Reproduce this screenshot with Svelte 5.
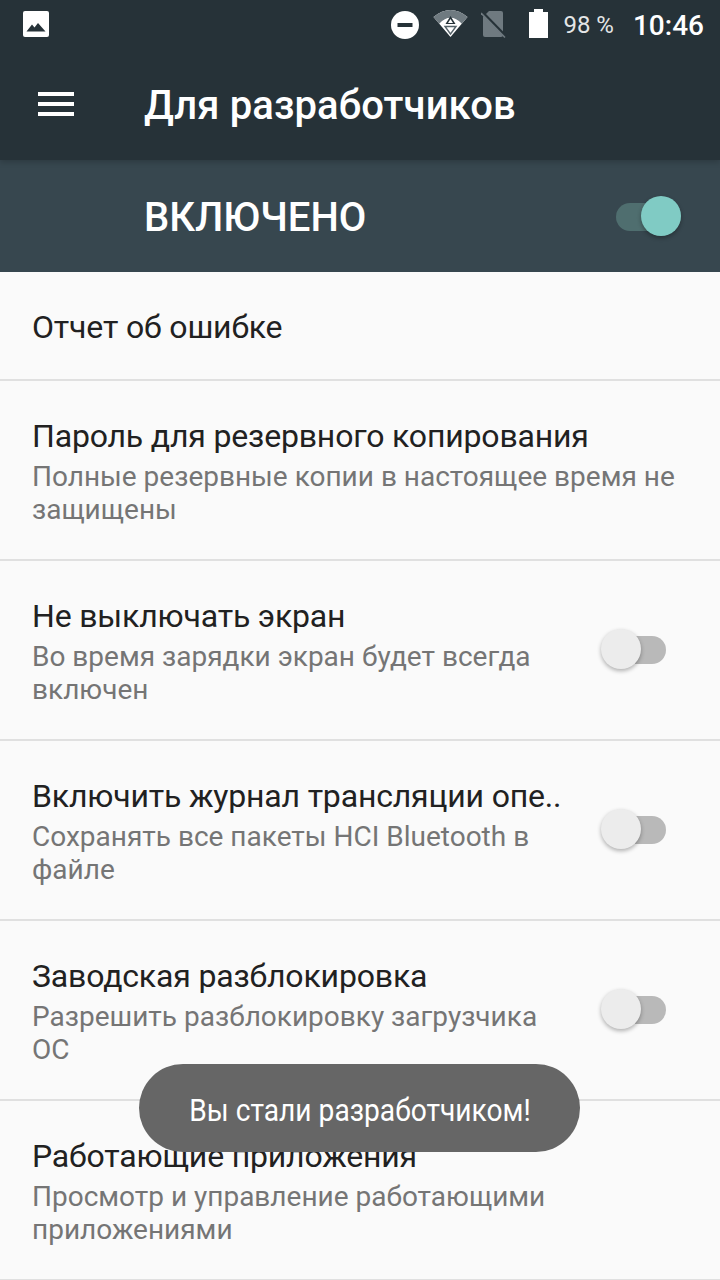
<script lang="ts">
	type Row = { title: string; summary?: string; toggle?: boolean };

	const rows: Row[] = [
		{ title: 'Отчет об ошибке' },
		{ title: 'Пароль для резервного копирования', summary: 'Полные резервные копии в настоящее время не защищены' },
		{ title: 'Не выключать экран', summary: 'Во время зарядки экран будет всегда включен', toggle: true },
		{ title: 'Включить журнал трансляции опе..', summary: 'Сохранять все пакеты HCI Bluetooth в файле', toggle: true },
		{ title: 'Заводская разблокировка', summary: 'Разрешить разблокировку загрузчика ОС', toggle: true },
		{ title: 'Работающие приложения', summary: 'Просмотр и управление работающими приложениями' }
	];
</script>

<div class="screen">
	<header class="appbar">
		<div class="status">
			<svg width="26" height="26" viewBox="0 0 26 26">
				<rect x="0" y="0" width="26" height="26" rx="2" fill="#fff" />
				<path d="M3.5 20.5 L9 13.5 L11.5 16.5 L15 12 L22.5 20.5 Z" fill="#263238" />
			</svg>
			<div class="status-right">
				<svg class="dnd" width="28" height="28" viewBox="0 0 28 28">
					<circle cx="14" cy="14" r="14" fill="#fff" />
					<rect x="6.5" y="12" width="15" height="4" fill="#263238" />
				</svg>
				<svg class="wifi" width="35" height="30" viewBox="0 0 35 30">
					<path d="M0.5 9 Q17.5 -5 34.5 9 L17.5 29 Z" fill="#fff" />
					<path d="M0.5 9 Q17.5 -5 34.5 9 L28.8 15.7 Q17.5 4 6.2 15.7 Z" fill="#6f7a80" />
					<path d="M17.5 8 L22.5 16 H12.5 Z" fill="#263238" />
					<path d="M17.5 11 L20 15 H15 Z" fill="#fff" />
					<path d="M12 18.5 H23 L17.5 26 Z" fill="#fff" stroke="#56636a" stroke-width="1.4" />
				</svg>
				<svg class="sim" width="26" height="30" viewBox="0 0 26 30">
					<path d="M8 2 H20 a2 2 0 0 1 2 2 V26 a2 2 0 0 1 -2 2 H4 a2 2 0 0 1 -2 -2 V8 Z" fill="#6f7a80" />
					<path d="M-1 1 L25 27.5" stroke="#263238" stroke-width="3" />
					<path d="M0 4 L24 28.5" stroke="#6f7a80" stroke-width="1.6" />
				</svg>
				<svg class="battery" width="19" height="30" viewBox="0 0 19 30">
					<path d="M5 0 H14 V3 H19 V29 H0 V3 H5 Z" fill="#fff" />
				</svg>
				<span class="pct">98 %</span>
				<span class="clock">10:46</span>
			</div>
		</div>
		<div class="toolbar">
			<div class="menu"><i></i><i></i><i></i></div>
			<h1>Для разработчиков</h1>
		</div>
	</header>

	<div class="master">
		<span>ВКЛЮЧЕНО</span>
		<div class="switch on"><b></b><em></em></div>
	</div>

	<ul class="list">
		{#each rows as row}
			<li class="row">
				<div class="text">
					<div class="title">{row.title}</div>
					{#if row.summary}<div class="summary">{row.summary}</div>{/if}
				</div>
				{#if row.toggle}
					<div class="switch"><b></b><em></em></div>
				{/if}
			</li>
		{/each}
	</ul>

	<div class="toast"><span>Вы стали разработчиком!</span></div>
</div>

<style>
	:global(body) {
		background: #fafafa;
	}

	.screen {
		position: relative;
		width: 720px;
		height: 1280px;
		overflow: hidden;
		background: #fafafa;
		font-family: Roboto, 'Noto Sans', sans-serif;
	}

	.appbar {
		position: relative;
		height: 160px;
		background: #263238;
		box-shadow: 0 2px 6px rgba(0, 0, 0, 0.2);
		color: #fff;
	}

	.status {
		display: flex;
		align-items: center;
		justify-content: space-between;
		height: 48px;
		padding: 0 16px 0 23px;
	}

	.status-right {
		display: flex;
		align-items: center;
	}

	.dnd {
		margin-top: 2px;
	}

	.wifi {
		margin-left: 14px;
		margin-bottom: 2px;
	}

	.sim {
		margin-left: 13px;
	}

	.battery {
		margin-left: 22px;
	}

	.pct {
		margin-left: 15px;
		margin-top: 2px;
		font-size: 24px;
		color: #e4e6e7;
	}

	.clock {
		margin-left: 19px;
		margin-top: 2px;
		font-size: 28px;
		font-weight: 500;
	}

	.toolbar {
		display: flex;
		align-items: center;
		height: 112px;
		padding-left: 38px;
	}

	.menu {
		display: flex;
		flex-direction: column;
		gap: 6px;
		width: 36px;
		margin-right: 70px;
	}

	.menu i {
		display: block;
		height: 4px;
		background: #fff;
	}

	h1 {
		margin: 0;
		padding-top: 3px;
		font-size: 40px;
		font-weight: 500;
		letter-spacing: 0.1px;
	}

	.master {
		display: flex;
		align-items: center;
		justify-content: space-between;
		height: 112px;
		padding: 0 39px 0 144px;
		background: #37474f;
		color: #fff;
		font-size: 40px;
		font-weight: 500;
	}

	.master span {
		padding-top: 3px;
	}

	.master .switch {
		margin-top: 2px;
	}

	.switch {
		position: relative;
		flex: none;
		width: 65px;
		height: 42px;
	}

	.switch b {
		position: absolute;
		left: 12px;
		right: 0;
		top: 7px;
		height: 28px;
		border-radius: 14px;
		background: #b9b9b9;
	}

	.switch em {
		position: absolute;
		left: 0;
		top: 0;
		width: 40px;
		height: 40px;
		border-radius: 50%;
		background: #ececec;
		box-shadow: 0 2px 4px rgba(0, 0, 0, 0.3);
	}

	.switch.on b {
		left: 0;
		right: 0;
		background: #4f6e6f;
	}

	.switch.on em {
		left: auto;
		right: 0;
		background: #80cbc4;
	}

	.list {
		margin: 0;
		padding: 0;
		list-style: none;
	}

	.row {
		display: flex;
		align-items: flex-start;
		justify-content: space-between;
		box-sizing: border-box;
		height: 180px;
		padding: 36px 54px 0 32px;
		border-bottom: 2px solid #e0e0e0;
	}

	.row:first-child {
		height: 109px;
	}

	.text {
		flex: 1;
		min-width: 0;
	}

	.title {
		font-size: 32px;
		line-height: 38px;
		letter-spacing: -0.17px;
		white-space: nowrap;
		color: #212121;
	}

	.summary {
		margin-top: 5px;
		font-size: 28px;
		line-height: 33px;
		color: #757575;
	}

	.row .switch {
		margin-top: 32px;
		margin-left: 35px;
	}

	.row:nth-child(2) .summary {
		margin-right: -22px;
	}

	.toast {
		position: absolute;
		left: 139px;
		top: 1064px;
		display: flex;
		align-items: center;
		justify-content: center;
		width: 441px;
		height: 88px;
		border-radius: 44px;
		background: #666;
		color: #fff;
		font-size: 32px;
	}

	.toast span {
		padding-top: 3px;
		transform: scaleX(0.88);
		white-space: nowrap;
	}
</style>
